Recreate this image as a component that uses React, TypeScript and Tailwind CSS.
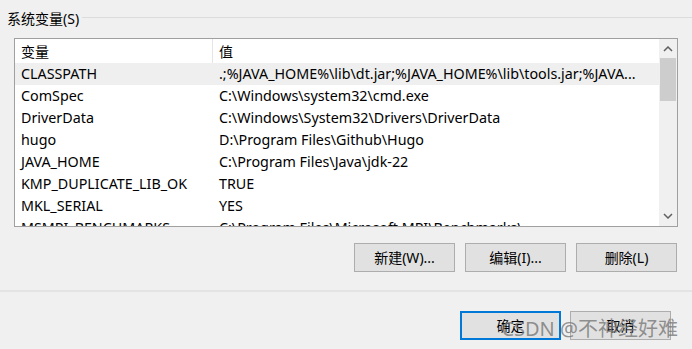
import React from 'react';

const rows: [string, string][] = [
  ['CLASSPATH', '.;%JAVA_HOME%\\lib\\dt.jar;%JAVA_HOME%\\lib\\tools.jar;%JAVA...'],
  ['ComSpec', 'C:\\Windows\\system32\\cmd.exe'],
  ['DriverData', 'C:\\Windows\\System32\\Drivers\\DriverData'],
  ['hugo', 'D:\\Program Files\\Github\\Hugo'],
  ['JAVA_HOME', 'C:\\Program Files\\Java\\jdk-22'],
  ['KMP_DUPLICATE_LIB_OK', 'TRUE'],
  ['MKL_SERIAL', 'YES'],
  ['MSMPI_BENCHMARKS', 'C:\\Program Files\\Microsoft MPI\\Benchmarks\\'],
];

const Chevron = ({ up }: { up?: boolean }) => (
  <svg width="10" height="6" viewBox="0 0 10 6" className="block">
    <path
      d={up ? 'M1 5 L5 1 L9 5' : 'M1 1 L5 5 L9 1'}
      fill="none"
      stroke="#606060"
      strokeWidth="1.5"
    />
  </svg>
);

const Btn = ({ label, focused }: { label: string; focused?: boolean }) => (
  <button
    className={
      focused
        ? 'w-[101px] h-[29px] bg-[#e1e1e1] border-2 border-[#0078d7] text-[14px] text-black flex items-center justify-center'
        : 'w-[101px] h-[29px] bg-[#e1e1e1] border border-[#adadad] text-[14px] text-black flex items-center justify-center'
    }
  >
    {label}
  </button>
);

export default function App() {
  return (
    <div
      className="w-[692px] h-[349px] bg-[#f0f0f0] overflow-hidden relative flex flex-col text-black"
      style={{ fontFamily: '"Noto Sans", "Noto Sans CJK SC", sans-serif' }}
    >
      {/* group title */}
      <div className="flex pl-[7px] pt-[9px] h-[29px]">
        <span className="text-[14px] leading-[20px] whitespace-nowrap">系统变量(S)</span>
        <div className="flex-1 h-px bg-[#dcdcdc] mt-[8px] ml-[3px]" />
      </div>

      {/* list view */}
      <div className="mt-[9px] ml-[14px] w-[664px] h-[189px] border border-[#a0a0a0] bg-white flex overflow-hidden">
        <div className="flex-1 overflow-hidden">
          <div className="flex h-[24px] text-[14px] items-center">
            <div className="w-[198px] h-full pl-[6px] flex items-center border-r border-[#e5e5e5]">变量</div>
            <div className="pl-[6px]">值</div>
          </div>
          {rows.map(([k, v], i) => (
            <div
              key={k}
              className={
                i === 0
                  ? 'flex h-[22px] items-center text-[14.3px] bg-[#efefef] whitespace-nowrap'
                  : 'flex h-[22px] items-center text-[14.3px] whitespace-nowrap'
              }
            >
              <div className="w-[198px] pl-[6px] shrink-0 overflow-hidden">{k}</div>
              <div className="pl-[6px] overflow-hidden">{v}</div>
            </div>
          ))}
        </div>
        <div className="w-[18px] bg-[#f0f0f0] flex flex-col items-center">
          <div className="h-[19px] flex items-center justify-center">
            <Chevron up />
          </div>
          <div className="w-[16px] h-[43px] bg-[#cdcdcd]" />
          <div className="flex-1" />
          <div className="h-[20px] flex items-center justify-center">
            <Chevron />
          </div>
        </div>
      </div>

      {/* action buttons */}
      <div className="flex justify-end gap-[10px] pr-[15px] mt-[16px]">
        <Btn label="新建(W)..." />
        <Btn label="编辑(I)..." />
        <Btn label="删除(L)" />
      </div>

      <div className="mt-[18px] h-[2px] bg-[#e3e3e3]" />

      <div className="flex justify-end gap-[9px] pr-[21px] mt-[19px]">
        <Btn label="确定" focused />
        <Btn label="取消" />
      </div>

      {/* watermark */}
      <div className="absolute right-[14px] bottom-[8px] text-[20px] leading-[24px] text-[rgba(120,120,120,0.8)] whitespace-nowrap pointer-events-none">
        CSDN @不神经好难
      </div>
    </div>
  );
}
